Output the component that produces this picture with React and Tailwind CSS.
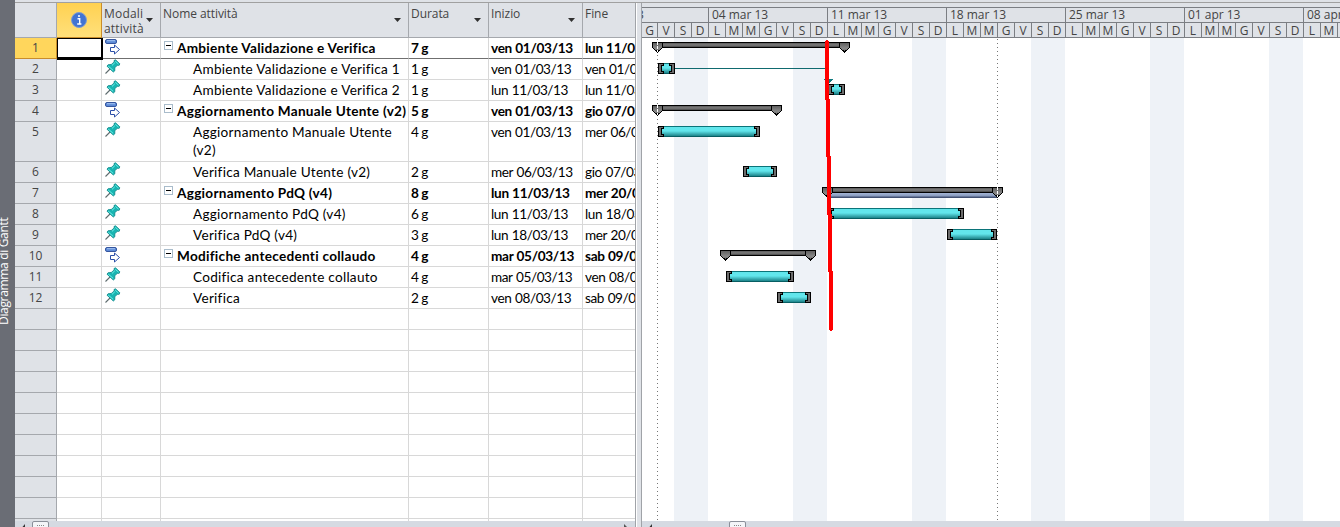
const rows = [
  { n: 1, name: 'Ambiente Validazione e Verifica', d: '7 g', s: 'ven 01/03/13', f: 'lun 11/03/13', sum: true },
  { n: 2, name: 'Ambiente Validazione e Verifica 1', d: '1 g', s: 'ven 01/03/13', f: 'ven 01/03/13' },
  { n: 3, name: 'Ambiente Validazione e Verifica 2', d: '1 g', s: 'lun 11/03/13', f: 'lun 11/03/13' },
  { n: 4, name: 'Aggiornamento Manuale Utente (v2)', d: '5 g', s: 'ven 01/03/13', f: 'gio 07/03/13', sum: true },
  { n: 5, name: 'Aggiornamento Manuale Utente (v2)', d: '4 g', s: 'ven 01/03/13', f: 'mer 06/03/13', tall: true },
  { n: 6, name: 'Verifica Manuale Utente (v2)', d: '2 g', s: 'mer 06/03/13', f: 'gio 07/03/13' },
  { n: 7, name: 'Aggiornamento PdQ (v4)', d: '8 g', s: 'lun 11/03/13', f: 'mer 20/03/13', sum: true, pin: true },
  { n: 8, name: 'Aggiornamento PdQ (v4)', d: '6 g', s: 'lun 11/03/13', f: 'lun 18/03/13' },
  { n: 9, name: 'Verifica PdQ (v4)', d: '3 g', s: 'lun 18/03/13', f: 'mer 20/03/13' },
  { n: 10, name: 'Modifiche antecedenti collaudo', d: '4 g', s: 'mar 05/03/13', f: 'sab 09/03/13', sum: true },
  { n: 11, name: 'Codifica antecedente collauto', d: '4 g', s: 'mar 05/03/13', f: 'ven 08/03/13' },
  { n: 12, name: 'Verifica', d: '2 g', s: 'ven 08/03/13', f: 'sab 09/03/13' },
  ...Array.from({ length: 11 }, () => ({})),
];

const weeks = ['04 mar 13', '11 mar 13', '18 mar 13', '25 mar 13', '01 apr 13', '08 apr 13'];
const dayLetters = ['L', 'M', 'M', 'G', 'V', 'S', 'D'];

function Pin() {
  return (
    <svg width="16" height="16" viewBox="0 0 16 16" className="block">
      <path d="M0.5 14.5 5 10" stroke="#5d6b6d" strokeWidth="1.1" />
      <path d="M9 1.500 10.500 .8 14.800 4.800 14.200 6.300 12.300 6.300 9.800 8.800 9.800 11.800 8.300 13 2 7.200 3 5.800 6.300 5.400 9.200 3Z" fill="#19b5b2" stroke="#0b8587" strokeWidth=".8" />
      <path d="M10.300 2.200 13.600 5.200 M7 6.400 9.800 3.800 M3.200 7 8.200 11.400" stroke="#6ff0ea" strokeWidth="1" />
    </svg>
  );
}

function Auto() {
  return (
    <svg width="16" height="16" viewBox="0 0 16 16" className="block">
      <rect x=".5" y=".5" width="11" height="4" rx="1.500" fill="#5d8ad6" stroke="#35569f" />
      <path d="M2 1.700h8" stroke="#a4c3f2" />
      <path d="M5.500 8.500h4v-2.500l5 4.500-5 4.500v-2.500h-4z" fill="#fff" stroke="#2c4fa8" />
    </svg>
  );
}

function Caret({ className }) {
  return (
    <svg width="7" height="4" viewBox="0 0 7 4" className={'absolute top-[15px] ' + className}>
      <path d="M0 0h7L3.500 4z" fill="#303030" />
    </svg>
  );
}

function Head({ className, children, caret }) {
  return (
    <div className={'relative h-[34px] shrink-0 overflow-hidden border-r border-[#a5a8ad] pl-[2px] pt-[3px] text-[12px] leading-[15px] tracking-[-0.06px] text-[#444] ' + className}>
      {children}
      {caret && <Caret className={caret} />}
    </div>
  );
}

function Row({ r, i }) {
  const h = r.tall ? 'h-[40px]' : 'h-[21px]';
  const line = i === 0 ? 'border-b-[#6f6f6f]' : 'border-b-[#d8d8d8]';
  const cell = 'shrink-0 overflow-hidden whitespace-nowrap border-r border-r-[#d8d8d8] border-b pl-[2px] pt-px leading-[18px] ' + line;
  const date = r.sum ? ' tracking-[-0.3px] [word-spacing:0.3px]' : ' tracking-[-0.42px] [word-spacing:0.6px]';
  return (
    <div className={'flex ' + h + (r.sum ? ' font-bold' : '')}>
      <div className={'w-[42px] shrink-0 border-b border-r pt-px text-center font-["Open_Sans","Noto_Sans",sans-serif] text-[12px] font-normal leading-[18px] text-[#444] ' + (i === 0 ? 'border-[#c98d2b] bg-[#ffd65c]' : 'border-[#a5a8ad] bg-[#dfe2e7]')}>{r.n}</div>
      {i === 0
        ? <div className="z-10 -mr-px h-[22px] w-[46px] shrink-0 border-t border-r-2 border-b-3 border-l border-black" />
        : <div className={cell + ' w-[45px]'} />}
      <div className={cell + ' w-[59px]'}>{r.n && (r.sum && !r.pin ? <div className="pl-px"><Auto /></div> : <div className="-mt-px pl-px"><Pin /></div>)}</div>
      <div className={cell + ' relative w-[248px]'}>
        {r.sum && <span className="absolute left-[3px] top-[3px] flex size-[9px] items-center justify-center border border-[#a9bccb] bg-white"><span className="h-px w-[5px] bg-black" /></span>}
        <div className={(r.sum ? 'pl-[14px] tracking-[0.27px]' : 'pl-[30px] tracking-[0.26px]') + (r.tall ? ' whitespace-normal pr-[8px]' : '')}>{r.name}</div>
      </div>
      <div className={cell + ' w-[80px] [word-spacing:-1px]'}>{r.d}</div>
      <div className={cell + ' w-[94px]' + date}>{r.s}</div>
      <div className={'min-w-0 grow overflow-hidden whitespace-nowrap border-b pl-[2px] pt-px leading-[18px] ' + line + date}>{r.f}</div>
    </div>
  );
}

function Task({ x, y, w }) {
  const e = x + w;
  return (
    <g>
      <rect x={x} y={y} width={w} height="11" fill="url(#teal)" />
      <g fill="#000">
        <path d={`M${x} ${y}h6v3h-2v5h2v3h-6z`} />
        <path d={`M${e} ${y}h-6v3h2v5h-2v3h6z`} />
      </g>
      <g fill="#6c6c6c">
        <path d={`M${x + 1} ${y + 1}h4v1h-2v7h2v1h-4z`} />
        <path d={`M${e - 1} ${y + 1}h-4v1h2v7h-2v1h4z`} />
      </g>
    </g>
  );
}

function Cap({ x, y }) {
  return <path d={`M${x + 0.5} ${y + 0.5}h10v5l-5 4.500-5-4.500z`} fill="url(#cap)" stroke="#000" />;
}

function Summary({ x, y, e }) {
  return (
    <g>
      <rect x={x} y={y} width={e - x} height="6" fill="#000" />
      <rect x={x + 1} y={y + 1} width={e - x - 2} height="4" fill="url(#gray)" />
      <Cap x={x} y={y} />
      <Cap x={e - 11} y={y} />
    </g>
  );
}

function Chart() {
  return (
    <svg width="698" height="483" viewBox="642 38 698 483" shapeRendering="crispEdges" className="block">
      <defs>
        <linearGradient id="teal" x1="0" y1="0" x2="0" y2="1">
          <stop offset="0" stopColor="#0b7479" /><stop offset=".09" stopColor="#0b7479" />
          <stop offset=".1" stopColor="#62e6ec" /><stop offset=".45" stopColor="#62e6ec" />
          <stop offset=".88" stopColor="#218a90" /><stop offset=".91" stopColor="#075e63" /><stop offset="1" stopColor="#075e63" />
        </linearGradient>
        <linearGradient id="gray" x1="0" y1="0" x2="0" y2="1">
          <stop offset="0" stopColor="#5c5c5c" /><stop offset=".5" stopColor="#7c7c7c" /><stop offset="1" stopColor="#484848" />
        </linearGradient>
        <linearGradient id="cap" x1="0" y1="0" x2="0" y2="1">
          <stop offset="0" stopColor="#5c5c5c" /><stop offset=".6" stopColor="#888" /><stop offset="1" stopColor="#666" />
        </linearGradient>
        <linearGradient id="blue" x1="0" y1="0" x2="0" y2="1">
          <stop offset="0" stopColor="#a5b6d6" /><stop offset=".5" stopColor="#8d9fc2" /><stop offset="1" stopColor="#2f3d5e" />
        </linearGradient>
      </defs>
      {[674, 793, 912, 1031, 1150, 1269].map((x) => <rect key={x} x={x} y="38" width="34" height="483" fill="#eef2f7" />)}
      <path d="M657.500 39V521M997.500 39V521" stroke="#777" strokeDasharray="1 3" />
      <path d="M675 68.500H828.500V80" stroke="#0f6a6f" fill="none" />
      <path d="M824 79h9l-4.500 5z" fill="#0f7a80" />
      <Summary x={652} e={850} y={42} />
      <Task x={658} y={63} w={17} />
      <Task x={828} y={84} w={17} />
      <Summary x={652} e={782} y={105} />
      <Task x={658} y={126} w={102} />
      <Task x={743} y={166} w={34} />
      <rect x="828" y="193" width="169" height="5" fill="url(#blue)" />
      <Summary x={822} e={1003} y={187} />
      <Task x={828} y={208} w={136} />
      <Task x={947} y={229} w={50} />
      <Summary x={720} e={816} y={250} />
      <Task x={726} y={271} w={68} />
      <Task x={777} y={292} w={34} />
      <path d="M657.500 42v10M657.500 105v10M997.500 187v10" stroke="#fff" strokeDasharray="3 1" />
      <path d="M825 41h1v-1h2v1h1v58h1v57h1v58h1v57h1v59h-1v1h-2v-1h-1v-58h-1v-57h-1v-58h-1v-57h-1z" fill="#f00" />
    </svg>
  );
}

function Timescale() {
  return (
    <div className="h-[35px] overflow-hidden border-b border-[#7b7e83] bg-[#dfe2e7] pt-[4px] text-[#444]">
      <div className="flex h-[16px] border-y border-[#7b7e83] text-[12px] leading-[14px]">
        <div className="relative w-[67px] shrink-0 overflow-hidden border-r border-[#7b7e83]"><span className="absolute -left-[5px]">3</span></div>
        {weeks.map((w) => <div key={w} className="w-[119px] shrink-0 border-r border-[#7b7e83] pl-[3px] tracking-[-0.02px]">{w}</div>)}
      </div>
      <div className="flex h-[14px] text-center text-[12px] leading-[15px]">
        <div className="w-[16px] shrink-0 border-r border-[#7b7e83]">G</div>
        {Array.from({ length: 41 }, (_, i) => (
          <div key={i} className="w-[17px] shrink-0 border-r border-[#7b7e83]">{dayLetters[(i + 4) % 7]}</div>
        ))}
      </div>
    </div>
  );
}

function Thumb() {
  return (
    <div className="flex h-[10px] w-[17px] justify-center gap-px rounded-t-[2px] border border-[#8a8f99] bg-[#f3f5f8] pt-[3px]">
      {[0, 1, 2, 3].map((k) => <span key={k} className="size-px bg-[#888]" />)}
    </div>
  );
}

function LeftArrow() {
  return <svg width="4" height="6" viewBox="0 0 4 6"><path d="M3 3v3H0.500z" fill="#333" /></svg>;
}

export default function App() {
  return (
    <div className='flex h-[527px] w-[1340px] overflow-hidden bg-white font-["Open_Sans","Noto_Sans",sans-serif]'>
      <div className="w-[15px] shrink-0 overflow-hidden bg-[#6a6d75] pt-[217px]">
        <div className="-ml-[5px] h-[108px] rotate-180 whitespace-nowrap text-[12px] leading-[18px] tracking-[-0.33px] text-white [writing-mode:vertical-rl]">Diagramma di Gantt</div>
      </div>
      <div className="flex min-w-0 grow flex-col">
        <div className="h-[3px] shrink-0 border-b border-[#a0a0a0] bg-[#dfe2e7]" />
        <div className="flex min-h-0 grow">
          <div className="flex w-[620px] shrink-0 flex-col">
            <div className="flex h-[35px] shrink-0 border-b border-[#a5a8ad] bg-[#dfe2e7]">
              <Head className="w-[42px]" />
              <div className="-mb-px flex h-[35px] w-[45px] shrink-0 items-center justify-center border-b border-r border-[#c98d2b] bg-linear-to-b from-[#ffd150] to-[#ffe07a]">
                <svg width="16" height="16" viewBox="0 0 16 16">
                  <circle cx="8" cy="8" r="7.500" fill="#4274d2" stroke="#7f9cd0" />
                  <path d="M6.500 6.700h2.200V12M6.200 12h4.200M7 4h2" stroke="#fff" strokeWidth="1.400" fill="none" />
                </svg>
              </div>
              <Head className="w-[59px]" caret="left-[44px]"><span className="tracking-[0.2px]">Modali<br />attività</span></Head>
              <Head className="w-[248px]" caret="left-[233px]">Nome attività</Head>
              <Head className="w-[80px]" caret="left-[65px]">Durata</Head>
              <Head className="w-[94px]" caret="left-[79px]">Inizio</Head>
              <Head className="grow border-r-0">Fine</Head>
            </div>
            <div className="h-[483px] shrink-0 overflow-hidden font-[Lato,sans-serif] text-[13.6px] text-black">
              {rows.map((r, i) => <Row key={i} r={r} i={i} />)}
            </div>
            <div className="flex h-[6px] overflow-hidden bg-[#d5dae2] pl-[7px]">
              <LeftArrow />
              <div className="pl-[6px]"><Thumb /></div>
              <div className="ml-auto pr-[7px]"><svg width="4" height="6" viewBox="0 0 4 6"><path d="M0 3v3h3z" fill="#555" /></svg></div>
            </div>
          </div>
          <div className="w-[7px] shrink-0 border-x border-[#a0a3a8] bg-[#dfe2e7]"><div className="h-full w-px bg-white" /></div>
          <div className="flex min-w-0 grow flex-col overflow-hidden">
            <Timescale />
            <Chart />
            <div className="flex h-[6px] shrink-0 overflow-hidden bg-[#d5dae2] pl-[7px]">
              <LeftArrow />
              <div className="pl-[76px]"><Thumb /></div>
            </div>
          </div>
        </div>
      </div>
    </div>
  );
}
